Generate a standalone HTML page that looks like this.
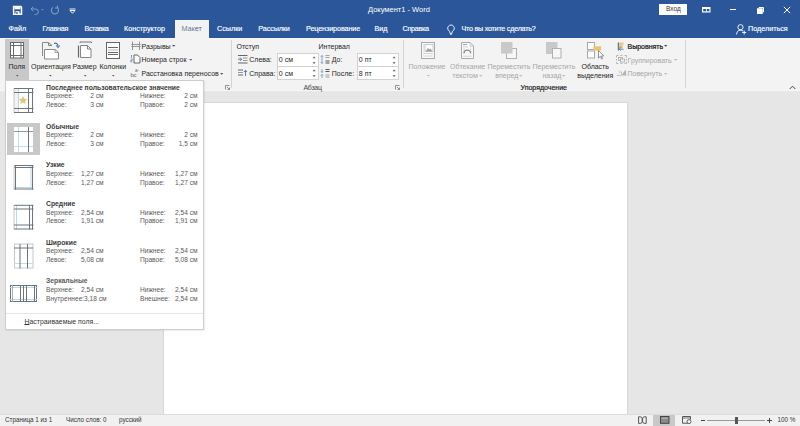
<!DOCTYPE html>
<html><head><meta charset="utf-8">
<style>
*{margin:0;padding:0;box-sizing:border-box}
html,body{width:800px;height:426px;overflow:hidden;background:#e6e6e6;font-family:"Liberation Sans",sans-serif;position:relative}
.a{position:absolute;white-space:nowrap;line-height:1}
#title{left:0;top:0;width:800px;height:38px;background:#2b579a}
.tab{color:#fff;font-size:7.2px;top:24.8px;-webkit-text-stroke:0.15px #fff}
#ribbon{left:0;top:38px;width:800px;height:54px;background:#f3f3f3;border-bottom:1px solid #e8e8e8;box-shadow:inset 0 -1px 0 #f6f6f6}
.rt{color:#262626;font-size:7px}
.dis{color:#a6a6a6}
.sep{width:1px;background:#d4d4d4}
#doc{left:163px;top:102px;width:465px;height:330px;background:#fff;border-left:1px solid #d8d8d8;border-right:1px solid #d8d8d8;border-top:1px solid #d8d8d8}
#status{left:0;top:414px;width:800px;height:12px;background:#f1f1f1;border-top:1px solid #dcdcdc}
.st{color:#333;font-size:6.3px;top:417px}
#menu{left:5px;top:80px;width:199px;height:250px;background:#fff;border:1px solid #cdcdcd;box-shadow:1px 1px 1px rgba(0,0,0,.06)}
.mt{font-size:6.6px;color:#5a5a5a}
.mb{font-size:6.8px;color:#3a3a3a;font-weight:bold}
</style></head><body>
<div class="a" id="title"></div>
<div class="a" id="ribbon"></div>
<!-- title bar -->
<svg class="a" style="left:12px;top:5px" width="11" height="10" viewBox="0 0 11 10"><path d="M1.6 1.6h7.3l0.6 0.6v7h-7.9z" fill="none" stroke="#fff" stroke-width="1.5"/><rect x="2.5" y="1" width="6" height="3.3" fill="#fff"/><rect x="3.5" y="6.2" width="4" height="3" fill="#fff"/><rect x="4.3" y="7" width="1.3" height="2" fill="#2b579a"/></svg>
<svg class="a" style="left:29px;top:5px" width="16" height="10" viewBox="0 0 16 10"><path d="M2 4h4.5a2.8 2.8 0 0 1 0 5.6h-1" fill="none" stroke="#7f9cc6" stroke-width="1"/><path d="M4.3 1.8l-2.3 2.2 2.3 2.2" fill="none" stroke="#7f9cc6" stroke-width="1"/><path d="M12.3 4h2.4l-1.2 1.5z" fill="#7f9cc6"/></svg>
<svg class="a" style="left:50px;top:5px" width="10" height="10" viewBox="0 0 10 10"><path d="M6.8 2.2a3.6 3.6 0 1 1 -4 .2" fill="none" stroke="#7f9cc6" stroke-width="1.1"/><path d="M7.5 0.5v2.5h-2.5" fill="none" stroke="#7f9cc6" stroke-width="1.1"/></svg>
<svg class="a" style="left:68.5px;top:7.5px" width="7" height="6" viewBox="0 0 7 6"><path d="M0.5 1h6" stroke="#fff" stroke-width="0.9"/><path d="M1 2.5h5l-2.5 2.8z" fill="none" stroke="#fff" stroke-width="0.9"/></svg>
<div class="a" style="left:368px;top:5.5px;color:#fff;font-size:7.5px">Документ1  -  Word</div>
<div class="a" style="left:659px;top:4px;width:28px;height:11px;background:#fff"></div>
<div class="a" style="left:666px;top:6px;color:#333;font-size:6.5px">Вход</div>
<svg class="a" style="left:702px;top:6.5px" width="9" height="6" viewBox="0 0 9 6"><rect x="0" y="0" width="8.5" height="5.5" fill="#fff"/><rect x="1.2" y="2" width="2.8" height="2.3" fill="#2b579a"/><rect x="4.8" y="2" width="2.6" height="2.3" fill="#2b579a"/></svg>
<div class="a" style="left:730px;top:9px;width:6px;height:1px;background:#fff"></div>
<svg class="a" style="left:757px;top:6.5px" width="7" height="7" viewBox="0 0 7 7"><rect x="0.5" y="1.8" width="4.7" height="4.7" fill="#fff" stroke="#fff" stroke-width="1"/><path d="M1.8 0.5h4.7v4.7" fill="none" stroke="#fff" stroke-width="1"/></svg>
<svg class="a" style="left:783px;top:6px" width="8" height="8" viewBox="0 0 8 8"><path d="M0.8 0.8l6.4 6.4M7.2 0.8l-6.4 6.4" stroke="#fff" stroke-width="1"/></svg>
<!-- tabs -->
<div class="a" style="left:175px;top:20px;width:34px;height:18px;background:#f3f3f3"></div>
<div class="a tab" style="left:8.5px">Файл</div>
<div class="a tab" style="left:42.5px;letter-spacing:-0.25px">Главная</div>
<div class="a tab" style="left:84.5px;letter-spacing:-0.4px">Вставка</div>
<div class="a tab" style="left:124px">Конструктор</div>
<div class="a tab" style="left:181.5px;color:#2b4a78">Макет</div>
<div class="a tab" style="left:217px">Ссылки</div>
<div class="a tab" style="left:258.3px;letter-spacing:-0.1px">Рассылки</div>
<div class="a tab" style="left:306px;letter-spacing:-0.1px">Рецензирование</div>
<div class="a tab" style="left:374.5px">Вид</div>
<div class="a tab" style="left:402.5px;letter-spacing:-0.28px">Справка</div>
<svg class="a" style="left:446.5px;top:23.5px" width="8" height="11" viewBox="0 0 8 11"><path d="M2.6 7.3a3.3 3.3 0 1 1 2.8 0l-.6 2.4h-1.6z" fill="none" stroke="#fff" stroke-width="0.9"/><path d="M3.2 10.3h1.6" stroke="#fff" stroke-width="0.9"/></svg>
<div class="a tab" style="left:461.5px;letter-spacing:-0.25px">Что вы хотите сделать?</div>
<svg class="a" style="left:736px;top:24px" width="11" height="11" viewBox="0 0 11 11"><circle cx="4.5" cy="3.2" r="2.6" fill="none" stroke="#fff" stroke-width="0.9"/><path d="M0.6 10.5a4 4 0 0 1 6.5-3.5" fill="none" stroke="#fff" stroke-width="0.9"/><path d="M8.2 6.5v4M6.2 8.5h4" stroke="#fff" stroke-width="0.9"/></svg>
<div class="a tab" style="left:748px">Поделиться</div>


<!-- ribbon: page setup -->
<div class="a" style="left:5px;top:39px;width:24px;height:41px;background:#c8c8c8"></div>
<svg class="a" style="left:10px;top:42px" width="14" height="17" viewBox="0 0 14 17"><rect x="0.5" y="0.5" width="13" height="15.5" fill="#fff" stroke="#6a6a6a" stroke-width="1"/><path d="M3.5 0.5v15.5M11 0.5v15.5M0.5 3.5h13M0.5 13.5h13" stroke="#6a6a6a" stroke-width="1"/></svg>
<div class="a rt" style="left:8.5px;top:63px">Поля</div>
<svg class="a" style="left:14.60px;top:73.70px" width="4.6" height="3.4" viewBox="0 0 4.6 3.4"><path d="M1 1h2.6l-1.3 1.4z" fill="#555"/></svg>
<svg class="a" style="left:41px;top:41px" width="20" height="20" viewBox="0 0 20 20"><path d="M1.5 14.5v-13h5.5" fill="none" stroke="#8a8a8a" stroke-width="1"/><path d="M1 14.5h1" stroke="#8a8a8a"/><path d="M7.5 1.5v3h3.5z" fill="none" stroke="#777" stroke-width="0.9"/><path d="M3.5 8.5h10.5l3.5 3v6.5h-14z" fill="#fff" stroke="#8a8a8a" stroke-width="1"/><path d="M14 8.5v3h3.5" fill="none" stroke="#8a8a8a" stroke-width="0.8"/><path d="M13 2.5c2-.8 3.8 0 4 2.5" fill="none" stroke="#3f6fb0" stroke-width="1.2"/><path d="M15.2 4.5l1.8 2 1.8-2" fill="none" stroke="#3f6fb0" stroke-width="1.1"/></svg>
<div class="a rt" style="left:31px;top:63px">Ориентация</div>
<svg class="a" style="left:47.90px;top:73.60px" width="4.6" height="3.4" viewBox="0 0 4.6 3.4"><path d="M1 1h2.6l-1.3 1.4z" fill="#555"/></svg>
<svg class="a" style="left:77px;top:41px" width="16" height="18" viewBox="0 0 16 18"><path d="M3 2v-1h11.5v1" fill="none" stroke="#777" stroke-width="1"/><path d="M1.5 4.5v12" stroke="#666" stroke-width="1.2"/><path d="M3.5 4.5h7l3.5 3.5v8.5h-10.5z" fill="#fff" stroke="#888" stroke-width="1"/><path d="M10.5 4.5v3.5h3.5" fill="none" stroke="#777" stroke-width="0.9"/></svg>
<div class="a rt" style="left:72.5px;top:63px">Размер</div>
<svg class="a" style="left:82.50px;top:73.60px" width="4.6" height="3.4" viewBox="0 0 4.6 3.4"><path d="M1 1h2.6l-1.3 1.4z" fill="#555"/></svg>
<svg class="a" style="left:106px;top:42px" width="14" height="17" viewBox="0 0 14 17"><rect x="0.5" y="0.5" width="13" height="16" fill="#fff" stroke="#666" stroke-width="1"/><path d="M2 5.5h10M2 10.5h10M2 12.5h10" stroke="#555" stroke-width="0.9"/><path d="M2 8h10" stroke="#a9c3c9" stroke-width="1.1"/></svg>
<div class="a rt" style="left:99.5px;top:63px">Колонки</div>
<svg class="a" style="left:111.20px;top:73.60px" width="4.6" height="3.4" viewBox="0 0 4.6 3.4"><path d="M1 1h2.6l-1.3 1.4z" fill="#555"/></svg>
<!-- small buttons -->
<svg class="a" style="left:130px;top:41px" width="11" height="10" viewBox="0 0 11 10"><path d="M2.5 0.5v8.5M9.5 0.5v8.5M1.5 3.5h9M1.5 5.5h9" stroke="#8a8a8a" stroke-width="0.9"/></svg>
<div class="a rt" style="left:141.5px;top:43px">Разрывы</div>
<svg class="a" style="left:170.90px;top:44.30px" width="5.4" height="3.8" viewBox="0 0 5.4 3.8"><path d="M1 1h3.4l-1.7 1.8z" fill="#555"/></svg>
<svg class="a" style="left:130px;top:54px" width="11" height="10" viewBox="0 0 11 10"><path d="M1 1.5h1M1.5 1v3M0.8 5h1.4v1.5h-1.4v1.5h1.4" fill="none" stroke="#5a7ea8" stroke-width="0.7"/><path d="M4 1h3.5l2.5 2.5v5.5h-6z" fill="#fff" stroke="#555" stroke-width="0.9"/></svg>
<div class="a rt" style="left:141.5px;top:56px">Номера строк</div>
<svg class="a" style="left:188.30px;top:58.40px" width="5.4" height="3.8" viewBox="0 0 5.4 3.8"><path d="M1 1h3.4l-1.7 1.8z" fill="#666"/></svg>
<div class="a" style="left:130.5px;top:71.5px;font-size:6px;color:#666;line-height:1;letter-spacing:-0.3px">bc</div><div class="a" style="left:135px;top:68.5px;font-size:4.5px;color:#666;line-height:1">a-</div>
<div class="a rt" style="left:141.5px;top:70px">Расстановка переносов</div>
<svg class="a" style="left:218.60px;top:71.90px" width="5.4" height="3.8" viewBox="0 0 5.4 3.8"><path d="M1 1h3.4l-1.7 1.8z" fill="#555"/></svg>
<div class="a sep" style="left:231px;top:40px;height:48px"></div>
<svg class="a" style="left:225px;top:85px" width="5" height="5" viewBox="0 0 5 5"><path d="M0.5 4.5v-4h4M2 2l2.5 2.5M4.5 2.5v2h-2" fill="none" stroke="#777" stroke-width="0.8"/></svg>
<!-- paragraph -->
<div class="a rt" style="left:236.5px;top:43px">Отступ</div>
<svg class="a" style="left:237px;top:54px" width="11" height="10" viewBox="0 0 11 10"><path d="M1 1.5h9.5M1 9h9.5" stroke="#555" stroke-width="0.9"/><path d="M6 4h4.5M6 6.5h4.5" stroke="#8a8a8a" stroke-width="0.9"/><path d="M1 5.2h3.5M3 3.5l1.7 1.7-1.7 1.7" fill="none" stroke="#3f6fb0" stroke-width="0.9"/></svg>
<div class="a rt" style="left:249.3px;top:56px">Слева:</div>
<svg class="a" style="left:237px;top:68px" width="11" height="10" viewBox="0 0 11 10"><path d="M1 2h5M1 7h5" stroke="#555" stroke-width="0.9"/><path d="M1 4.5h5" stroke="#8a8a8a" stroke-width="0.9"/><path d="M8.5 2.5v5.5M7 4l1.5-1.8 1.5 1.8" fill="none" stroke="#3f6fb0" stroke-width="0.9"/></svg>
<div class="a rt" style="left:249.3px;top:70px">Справа:</div>
<div class="a" style="left:277px;top:53px;width:42px;height:14px;background:#fff;border:1px solid #d2d2d2"></div>
<div class="a" style="left:277px;top:66px;width:42px;height:14px;background:#fff;border:1px solid #d2d2d2"></div>
<div class="a rt" style="left:278.8px;top:56px">0 см</div>
<div class="a rt" style="left:278.8px;top:70px">0 см</div>
<svg class="a" style="left:311.5px;top:54.5px" width="5" height="10" viewBox="0 0 5 10"><path d="M0.6 3.2h3l-1.5-1.7z" fill="#555"/><path d="M0.6 7.2h3l-1.5 1.7z" fill="#555"/></svg>
<svg class="a" style="left:311.5px;top:67.5px" width="5" height="10" viewBox="0 0 5 10"><path d="M0.6 3.2h3l-1.5-1.7z" fill="#555"/><path d="M0.6 7.2h3l-1.5 1.7z" fill="#555"/></svg>
<div class="a rt" style="left:318.5px;top:43px">Интервал</div>
<svg class="a" style="left:320px;top:54px" width="11" height="11" viewBox="0 0 11 11"><path d="M2 1.5v8M0.8 2.8l1.2-1.3 1.2 1.3M0.8 8.2l1.2 1.3 1.2-1.3" fill="none" stroke="#6f93b8" stroke-width="0.8"/><path d="M5.5 1.5h4M5.5 3.5h4" stroke="#9a9a9a" stroke-width="0.9"/><path d="M5.5 7h4M5.5 9h4" stroke="#555" stroke-width="1"/></svg>
<div class="a rt" style="left:331.8px;top:56px">До:</div>
<svg class="a" style="left:320px;top:67.5px" width="11" height="11" viewBox="0 0 11 11"><path d="M2 1v3.5M0.8 3.2l1.2 1.3 1.2-1.3M2 10v-3.5M0.8 7.8l1.2-1.3 1.2 1.3" fill="none" stroke="#6f93b8" stroke-width="0.8"/><path d="M5.5 1.5h4M5.5 3.5h4" stroke="#555" stroke-width="1"/><path d="M5.5 7h4M5.5 9h4" stroke="#9a9a9a" stroke-width="0.9"/></svg>
<div class="a rt" style="left:331.8px;top:70px">После:</div>
<div class="a" style="left:357px;top:53px;width:42px;height:14px;background:#fff;border:1px solid #d2d2d2"></div>
<div class="a" style="left:357px;top:66px;width:42px;height:14px;background:#fff;border:1px solid #d2d2d2"></div>
<div class="a rt" style="left:358.8px;top:56px">0 пт</div>
<div class="a rt" style="left:358.8px;top:70px">8 пт</div>
<svg class="a" style="left:391.5px;top:54.5px" width="5" height="10" viewBox="0 0 5 10"><path d="M0.6 3.2h3l-1.5-1.7z" fill="#555"/><path d="M0.6 7.2h3l-1.5 1.7z" fill="#555"/></svg>
<svg class="a" style="left:391.5px;top:67.5px" width="5" height="10" viewBox="0 0 5 10"><path d="M0.6 3.2h3l-1.5-1.7z" fill="#555"/><path d="M0.6 7.2h3l-1.5 1.7z" fill="#555"/></svg>
<div class="a rt" style="left:303.5px;top:83.5px;color:#444;letter-spacing:-0.3px">Абзац</div>
<svg class="a" style="left:395px;top:85px" width="5" height="5" viewBox="0 0 5 5"><path d="M0.5 4.5v-4h4M2 2l2.5 2.5M4.5 2.5v2h-2" fill="none" stroke="#777" stroke-width="0.8"/></svg>
<div class="a sep" style="left:403px;top:40px;height:48px"></div>
<!-- arrange -->
<svg class="a" style="left:421px;top:42px" width="15" height="17" viewBox="0 0 15 17"><rect x="0.5" y="0.5" width="13" height="16" fill="#fafafa" stroke="#a8a8a8" stroke-width="1"/><rect x="4" y="2.5" width="8" height="7" fill="#fff" stroke="#bbb" stroke-width="0.8"/><path d="M4.5 9.5l2.5-3.5 1.5 1.5 1-1 2 3z" fill="#a0a0a0"/><path d="M2.3 3h.6M2.3 5h.6M2.3 7h.6M2.3 9h.6" stroke="#aaa" stroke-width="0.8"/><path d="M2 11.5h10M2 14h10" stroke="#cfcfcf" stroke-width="0.9"/></svg>
<div class="a rt dis" style="left:408.5px;top:63px">Положение</div>
<svg class="a" style="left:425.70px;top:73.70px" width="4.6" height="3.4" viewBox="0 0 4.6 3.4"><path d="M1 1h2.6l-1.3 1.4z" fill="#b0b0b0"/></svg>
<svg class="a" style="left:461px;top:42px" width="13" height="17" viewBox="0 0 13 17"><path d="M0.5 0.5h8.5l3.5 3.5v12.5h-12z" fill="#fafafa" stroke="#a8a8a8" stroke-width="1"/><path d="M9 0.5v3.5h3.5" fill="none" stroke="#bbb" stroke-width="0.7"/><path d="M2 2.5h4" stroke="#999" stroke-width="0.9"/><path d="M2 4.8h5M9 4.8h1.5M2 7.2h2M9 7.2h1.5M2 9.5h1M10 9.5h.8M2 14.2h8.5" stroke="#c4c4c4" stroke-width="0.8"/><path d="M3 11.5a3.3 3.3 0 0 1 6.6 0" fill="none" stroke="#8f8f8f" stroke-width="1.3"/></svg>
<div class="a rt dis" style="left:450px;top:63px">Обтекание</div>
<div class="a rt dis" style="left:452.3px;top:72.3px">текстом</div>
<svg class="a" style="left:478.30px;top:73.90px" width="5.4" height="3.8" viewBox="0 0 5.4 3.8"><path d="M1 1h3.4l-1.7 1.8z" fill="#b8b8b8"/></svg>
<svg class="a" style="left:501px;top:42px" width="16" height="17" viewBox="0 0 16 17"><rect x="5.5" y="6.5" width="10" height="10" fill="#f7f7f7" stroke="#b0b0b0" stroke-width="1"/><rect x="0" y="0" width="11.5" height="11.5" fill="#c9c9c9"/></svg>
<div class="a rt dis" style="left:487.5px;top:63px">Переместить</div>
<div class="a rt dis" style="left:495.3px;top:72.3px">вперед</div>
<svg class="a" style="left:518.10px;top:73.90px" width="5.4" height="3.8" viewBox="0 0 5.4 3.8"><path d="M1 1h3.4l-1.7 1.8z" fill="#b8b8b8"/></svg>
<svg class="a" style="left:546px;top:42px" width="16" height="17" viewBox="0 0 16 17"><rect x="0" y="0" width="11.5" height="12" fill="#c9c9c9"/><rect x="6.5" y="6.5" width="8.5" height="9.5" fill="#f7f7f7" stroke="#b0b0b0" stroke-width="1"/></svg>
<div class="a rt dis" style="left:532.5px;top:63px">Переместить</div>
<div class="a rt dis" style="left:542.5px;top:72.3px">назад</div>
<svg class="a" style="left:560.70px;top:73.90px" width="5.4" height="3.8" viewBox="0 0 5.4 3.8"><path d="M1 1h3.4l-1.7 1.8z" fill="#b8b8b8"/></svg>
<svg class="a" style="left:586px;top:41px" width="19" height="19" viewBox="0 0 19 19"><rect x="1.5" y="1.5" width="7" height="7" fill="#fff" stroke="#a0a0a0" stroke-width="0.9"/><rect x="1.5" y="10" width="7" height="7" fill="#fff" stroke="#a0a0a0" stroke-width="0.9"/><rect x="7.5" y="5.3" width="7.5" height="4.2" fill="#efc06a"/><path d="M12.5 9.5v7.5l1.8-1.6 1.4 2.6.9-.4-1.3-2.6h2.4z" fill="#fff" stroke="#666" stroke-width="0.7"/></svg>
<div class="a rt" style="left:581.5px;top:63px">Область</div>
<div class="a rt" style="left:577.2px;top:72.3px">выделения</div>
<svg class="a" style="left:617px;top:41.5px" width="8" height="9" viewBox="0 0 8 9"><rect x="2" y="0.5" width="4.5" height="2.8" fill="#e8c890"/><rect x="2" y="3.5" width="3.5" height="2.5" fill="#d9b77a"/><path d="M1.3 0.5v8" stroke="#555" stroke-width="1"/><path d="M6.5 7.2h-4.5M3.8 5.8l-1.6 1.4 1.6 1.4" fill="none" stroke="#4f7bb0" stroke-width="0.9"/></svg>
<div class="a rt" style="left:627.5px;top:43px;color:#111;-webkit-text-stroke:0.2px #111">Выровнять</div>
<svg class="a" style="left:662.90px;top:44.30px" width="5.4" height="3.8" viewBox="0 0 5.4 3.8"><path d="M1 1h3.4l-1.7 1.8z" fill="#444"/></svg>
<svg class="a" style="left:616px;top:55px" width="11" height="9" viewBox="0 0 11 9"><path d="M0.5 0.5h2M4.5 0.5h2M8.5 0.5h2M0.5 8.5h2M4.5 8.5h2M8.5 8.5h2M0.5 0.5v2M0.5 4v1.5M0.5 7v1.5M10.5 0.5v2M10.5 4v1.5M10.5 7v1.5" fill="none" stroke="#b0b0b0" stroke-width="0.9"/><rect x="2.5" y="2.5" width="4" height="3" fill="none" stroke="#a8a8a8" stroke-width="0.8"/><rect x="4.5" y="4" width="4" height="3" fill="#f3f3f3" stroke="#a8a8a8" stroke-width="0.8"/></svg>
<div class="a rt dis" style="left:627.5px;top:56.5px">Группировать</div>
<svg class="a" style="left:673.30px;top:58.30px" width="5.4" height="3.8" viewBox="0 0 5.4 3.8"><path d="M1 1h3.4l-1.7 1.8z" fill="#b8b8b8"/></svg>
<svg class="a" style="left:616px;top:69px" width="11" height="7" viewBox="0 0 11 7"><path d="M5.5 6.5l4-6 1 6z" fill="#b3b3b3"/><path d="M0.5 6.5h4.5M3 1.5l1.5 1.5-1.5 1.5" fill="none" stroke="#b8b8b8" stroke-width="0.8"/><path d="M5.5 6.5v-4" stroke="#b8b8b8" stroke-width="0.8"/></svg>
<div class="a rt dis" style="left:627.5px;top:70px">Повернуть</div>
<svg class="a" style="left:662.50px;top:71.80px" width="5.4" height="3.8" viewBox="0 0 5.4 3.8"><path d="M1 1h3.4l-1.7 1.8z" fill="#b8b8b8"/></svg>
<div class="a rt" style="left:520.5px;top:83.5px;color:#222;-webkit-text-stroke:0.2px #222">Упорядочение</div>
<div class="a sep" style="left:685px;top:40px;height:48px"></div>
<svg class="a" style="left:789px;top:85px" width="7" height="5" viewBox="0 0 7 5"><path d="M0.7 4l2.8-2.8 2.8 2.8" fill="none" stroke="#444" stroke-width="1"/></svg>
<div class="a" id="doc"></div>
<div class="a" id="status"></div>
<div class="a" id="menu"></div>
<!-- menu -->
<svg class="a" style="left:13px;top:87px" width="21" height="27" viewBox="0 0 21 27"><rect x="1" y="1" width="19" height="25" fill="#fff"/><rect x="1" y="1" width="4" height="25" fill="#f2f2f2"/><path d="M1 1.5v24" stroke="#c8c8c8" stroke-width="1"/><path d="M5.5 1v25" stroke="#bcd6e4" stroke-width="1"/><path d="M1 1.5h19.5M1 5.5h19.5M1 21.5h19.5M1 25.5h19.5M15.5 1v25M19.5 1v25" stroke="#6a757d" stroke-width="1"/><path d="M10 9l1.3 2.8 3 .3-2.3 2 .7 3-2.7-1.6-2.7 1.6.7-3-2.3-2 3-.3z" fill="#e2c27a"/></svg>
<div class="a mb" style="left:46px;top:84.8px">Последнее пользовательское значение</div>
<div class="a mt" style="left:46px;top:93.4px">Верхнее:</div>
<div class="a mt" style="right:696.5px;top:93.4px">2 см</div>
<div class="a mt" style="left:140px;top:93.4px">Нижнее:</div>
<div class="a mt" style="right:602.5px;top:93.4px">2 см</div>
<div class="a mt" style="left:46px;top:102.1px">Левое:</div>
<div class="a mt" style="right:696.5px;top:102.1px">3 см</div>
<div class="a mt" style="left:140px;top:102.1px">Правое:</div>
<div class="a mt" style="right:602.5px;top:102.1px">2 см</div>
<div class="a" style="left:7px;top:123px;width:33px;height:32px;background:#c8c8c8"></div>
<svg class="a" style="left:13px;top:126px" width="21" height="27" viewBox="0 0 21 27"><rect x="1" y="1" width="19" height="25" fill="#fff"/><path d="M5.5 1v25M1 20.5h19" stroke="#c2dfe3" stroke-width="1"/><path d="M1 5.5h19" stroke="#8d99a1" stroke-width="1"/><path d="M15.5 1v25" stroke="#6a757d" stroke-width="1"/></svg>
<div class="a mb" style="left:46px;top:123.5px">Обычные</div>
<div class="a mt" style="left:46px;top:132.1px">Верхнее:</div>
<div class="a mt" style="right:696.5px;top:132.1px">2 см</div>
<div class="a mt" style="left:140px;top:132.1px">Нижнее:</div>
<div class="a mt" style="right:602.5px;top:132.1px">2 см</div>
<div class="a mt" style="left:46px;top:140.8px">Левое:</div>
<div class="a mt" style="right:696.5px;top:140.8px">3 см</div>
<div class="a mt" style="left:140px;top:140.8px">Правое:</div>
<div class="a mt" style="right:602.5px;top:140.8px">1,5 см</div>
<svg class="a" style="left:13px;top:164px" width="21" height="27" viewBox="0 0 21 27"><rect x="1" y="1" width="19" height="24.5" fill="#fff"/><path d="M18 1v24M1 23.5h19" stroke="#bcd6e4" stroke-width="1"/><path d="M1 1.5h19.5M1 3.5h19.5M2.5 1v24.5M19.5 1v24.5M1 25h19.5" stroke="#6a757d" stroke-width="1"/><path d="M1 1v24.5" stroke="#c8c8c8" stroke-width="1"/></svg>
<div class="a mb" style="left:46px;top:162.2px">Узкие</div>
<div class="a mt" style="left:46px;top:170.8px">Верхнее:</div>
<div class="a mt" style="right:696.5px;top:170.8px">1,27 см</div>
<div class="a mt" style="left:140px;top:170.8px">Нижнее:</div>
<div class="a mt" style="right:602.5px;top:170.8px">1,27 см</div>
<div class="a mt" style="left:46px;top:179.5px">Левое:</div>
<div class="a mt" style="right:696.5px;top:179.5px">1,27 см</div>
<div class="a mt" style="left:140px;top:179.5px">Правое:</div>
<div class="a mt" style="right:602.5px;top:179.5px">1,27 см</div>
<svg class="a" style="left:13px;top:203.5px" width="21" height="27" viewBox="0 0 21 27"><rect x="1" y="1" width="19" height="24.5" fill="#fff"/><path d="M1 1v24.5" stroke="#c8c8c8" stroke-width="1"/><path d="M3.5 1v24.5" stroke="#bcd6e4" stroke-width="1"/><path d="M1 1.3h19.5M1 5h19.5M1 21h19.5M1 25h19.5M16.5 1v24.5M19.5 1v24.5" stroke="#6a757d" stroke-width="1"/></svg>
<div class="a mb" style="left:46px;top:200.9px">Средние</div>
<div class="a mt" style="left:46px;top:209.5px">Верхнее:</div>
<div class="a mt" style="right:696.5px;top:209.5px">2,54 см</div>
<div class="a mt" style="left:140px;top:209.5px">Нижнее:</div>
<div class="a mt" style="right:602.5px;top:209.5px">2,54 см</div>
<div class="a mt" style="left:46px;top:218.2px">Левое:</div>
<div class="a mt" style="right:696.5px;top:218.2px">1,91 см</div>
<div class="a mt" style="left:140px;top:218.2px">Правое:</div>
<div class="a mt" style="right:602.5px;top:218.2px">1,91 см</div>
<svg class="a" style="left:13px;top:242.5px" width="21" height="27" viewBox="0 0 21 27"><rect x="1.5" y="1" width="18.5" height="24" fill="#fff" stroke="#c8c8c8" stroke-width="1"/><path d="M1 20.5h19" stroke="#c2dfe3" stroke-width="1"/><path d="M1 5h19M7 1v24.5M14.5 1v24.5" stroke="#6a757d" stroke-width="1"/></svg>
<div class="a mb" style="left:46px;top:239.6px">Широкие</div>
<div class="a mt" style="left:46px;top:248.2px">Верхнее:</div>
<div class="a mt" style="right:696.5px;top:248.2px">2,54 см</div>
<div class="a mt" style="left:140px;top:248.2px">Нижнее:</div>
<div class="a mt" style="right:602.5px;top:248.2px">2,54 см</div>
<div class="a mt" style="left:46px;top:256.9px">Левое:</div>
<div class="a mt" style="right:696.5px;top:256.9px">5,08 см</div>
<div class="a mt" style="left:140px;top:256.9px">Правое:</div>
<div class="a mt" style="right:602.5px;top:256.9px">5,08 см</div>
<svg class="a" style="left:9px;top:284px" width="29" height="19" viewBox="0 0 29 19"><rect x="1.5" y="1.5" width="26" height="16" fill="#fff" stroke="#6a747c" stroke-width="1"/><path d="M1 3.5h27M1 15.5h27" stroke="#b7d3dc" stroke-width="0.9"/><path d="M3.5 1v17" stroke="#9aa6ad" stroke-width="0.9"/><path d="M11.5 1v17M14.5 1v17M17.5 1v17M25.5 1v17" stroke="#6a757d" stroke-width="1"/></svg>
<div class="a mb" style="left:46px;top:278.3px;color:#5a5a5a">Зеркальные</div>
<div class="a mt" style="left:46px;top:286.9px">Верхнее:</div>
<div class="a mt" style="right:696.5px;top:286.9px">2,54 см</div>
<div class="a mt" style="left:140px;top:286.9px">Нижнее:</div>
<div class="a mt" style="right:602.5px;top:286.9px">2,54 см</div>
<div class="a mt" style="left:46px;top:295.6px">Внутреннее:</div>
<div class="a mt" style="left:84px;top:295.6px">3,18 см</div>
<div class="a mt" style="left:140px;top:295.6px">Внешнее:</div>
<div class="a mt" style="right:602.5px;top:295.6px">2,54 см</div>
<div class="a" style="left:6px;top:313px;width:197px;height:1px;background:#e6e6e6"></div>
<div class="a mt" style="left:24.5px;top:318.8px;color:#333;font-size:6.9px"><u style="text-underline-offset:0px;text-decoration-thickness:0.8px">Н</u>астраиваемые поля...</div>
<!-- status -->
<div class="a st" style="left:5px">Страница 1 из 1</div>
<div class="a st" style="left:66px">Число слов: 0</div>
<div class="a st" style="left:119px">русский</div>
<svg class="a" style="left:637.5px;top:416px" width="9" height="8" viewBox="0 0 9 8"><path d="M0.6 0.8h1.6a2 2 0 0 1 2 2v2.6a2 2 0 0 1 -2 2h-1.6z" fill="none" stroke="#555" stroke-width="1"/><path d="M8.2 0.8h-1.6a2 2 0 0 0 -2 2v2.6a2 2 0 0 0 2 2h1.6z" fill="none" stroke="#555" stroke-width="1"/></svg>
<div class="a" style="left:653px;top:415px;width:22px;height:11px;background:#c8c8c8"></div>
<svg class="a" style="left:659.5px;top:416px" width="10" height="8" viewBox="0 0 10 8"><rect x="0.5" y="0.5" width="8.5" height="6.8" fill="#8a8a8a" stroke="#444" stroke-width="1"/><rect x="1.5" y="1.5" width="6.5" height="1.5" fill="#a8a8a8"/></svg>
<svg class="a" style="left:681.5px;top:416px" width="10" height="8" viewBox="0 0 10 8"><path d="M6 7.2h-5.5v-6.7h8v3" fill="none" stroke="#555" stroke-width="1"/><path d="M0.5 2h8" stroke="#555" stroke-width="0.8"/><circle cx="7" cy="5.6" r="2" fill="#f1f1f1" stroke="#555" stroke-width="0.9"/></svg>
<div class="a" style="left:701px;top:420px;width:4px;height:1px;background:#444"></div>
<div class="a" style="left:707px;top:420px;width:58px;height:1px;background:#999"></div>
<div class="a" style="left:734.5px;top:417px;width:3px;height:7px;background:#555"></div>
<div class="a" style="left:767px;top:420px;width:5px;height:1px;background:#444"></div>
<div class="a" style="left:769px;top:418px;width:1px;height:5px;background:#444"></div>
<div class="a st" style="left:777.5px">100 %</div>

</body></html>
